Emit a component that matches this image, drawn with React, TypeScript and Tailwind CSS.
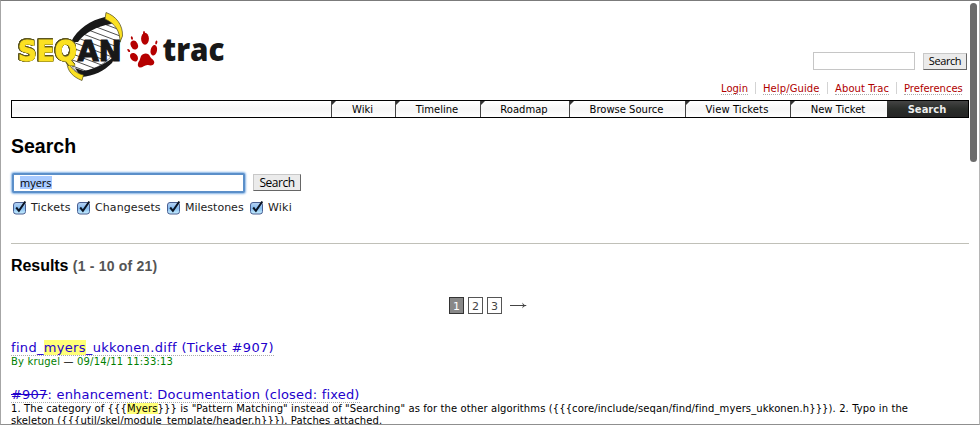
import React from 'react';

const verdana = "font-['DejaVu_Sans',sans-serif]";
const arial = "font-['Liberation_Sans',Arial,sans-serif]";
const lucida = "font-['Open_Sans',sans-serif]";

function Logo() {
  return (
    <svg width="225" height="80" viewBox="11 6 225 80" className="block">
      <defs>
        <clipPath id="helix">
          <path d="M107 20C92 25 78 36 71 46C66 59 71 68 79 73C97 70 112 60 119 45C123 35 121 26 107 20Z" />
        </clipPath>
      </defs>
      <path d="M107 20C92 25 78 36 71 46C66 59 71 68 79 73C97 70 112 60 119 45C123 35 121 26 107 20Z" fill="#fff" stroke="#333" strokeWidth="0.6" />
      <g clipPath="url(#helix)" stroke="#222" strokeWidth="0.8">
        {[0, 1, 2, 3, 4, 5, 6, 7, 8, 9, 10, 11].map((i) => (
          <line key={i} x1="62" y1={2 + i * 6} x2="128" y2={27 + i * 6} />
        ))}
      </g>
      <path d="M105 17L111 24C97 26 84 33 78 42L71 42C77 29 91 20 105 17Z" fill="#181818" />
      <path d="M98 20L108 17L115 23L104 25Z" fill="#181818" />
      <path d="M75 68L84 71C98 68 108 62 116 55L112 63C104 71 94 76 81 77Z" fill="#181818" />
      <path d="M106 12.500C116 16 123 25 122.500 36L120 42C120 32 116 24 105 19Z" fill="#fbe122" stroke="#4b4520" strokeWidth="0.7" />
      <path d="M67 54C67 65 74 73 83.500 75L82 80.500C73 77 67 71 67 62Z" fill="#fbe122" stroke="#4b4520" strokeWidth="0.7" />
      <g fontFamily="DejaVu Sans" fontWeight="700" fontSize="28">
        <text
          x="18"
          y="60.500"
          textLength="59"
          lengthAdjust="spacingAndGlyphs"
          fill="#fbe122"
          stroke="#fbe122"
          strokeWidth="1"
          className="[filter:drop-shadow(0.5px_0_0_#5c5520)_drop-shadow(-0.5px_0_0_#5c5520)_drop-shadow(0_0.5px_0_#5c5520)_drop-shadow(0_-0.5px_0_#5c5520)]"
        >
          SEQ
        </text>
        <text x="77.500" y="60.500" textLength="44" lengthAdjust="spacingAndGlyphs" fill="#181818" stroke="#181818" strokeWidth="1.200">AN</text>
      </g>
      <g fill="#b50000">
        <ellipse cx="145" cy="38.800" rx="3.900" ry="6" />
        <ellipse cx="134.300" cy="45" rx="3.500" ry="4.600" transform="rotate(-25 134.300 45)" />
        <ellipse cx="153.800" cy="50.300" rx="3.200" ry="5.300" transform="rotate(12 153.800 50.300)" />
        <ellipse cx="134" cy="57.200" rx="3.500" ry="4.700" transform="rotate(-38 134 57.200)" />
        <ellipse cx="144" cy="33" rx="1" ry="2" />
        <ellipse cx="131.900" cy="38" rx="1" ry="1.800" transform="rotate(-15 131.900 38)" />
        <ellipse cx="156.300" cy="42.500" rx="1" ry="2" transform="rotate(12 156.300 42.500)" />
        <ellipse cx="128.700" cy="50.500" rx="1" ry="1.800" transform="rotate(-40 128.700 50.500)" />
        <path d="M141 56C143 52.500 149 52.500 150 56.500C151 59 154.300 59.500 154.300 62.500C154 65.500 151 66 148 65C145 64.500 143 67.500 140 67.500C137 67 137.500 63 139.500 60.500Z" />
      </g>
      <text x="162.500" y="61" textLength="62" lengthAdjust="spacingAndGlyphs" fontFamily="Open Sans" fontWeight="800" fontSize="32" fill="#181818">trac</text>
    </svg>
  );
}

const metaLinks = [
  { label: 'Login', cls: 'w-[27px]' },
  { label: 'Help/Guide', cls: 'w-[57px] tracking-[0.1px]' },
  { label: 'About Trac', cls: 'w-[54px] tracking-[0.1px]' },
  { label: 'Preferences', cls: 'w-[58px]' },
];

const navItems = [
  { label: 'Wiki', cls: 'w-[64px]' },
  { label: 'Timeline', cls: 'w-[85px]' },
  { label: 'Roadmap', cls: 'w-[89px]' },
  { label: 'Browse Source', cls: 'w-[116px]' },
  { label: 'View Tickets', cls: 'w-[105px] tracking-[0.1px]' },
  { label: 'New Ticket', cls: 'w-[97px]' },
];

const filters = [
  { label: 'Tickets', cls: 'w-[46px] tracking-[0.2px]' },
  { label: 'Changesets', cls: 'w-[72px] tracking-[0.1px]' },
  { label: 'Milestones', cls: 'w-[65px]' },
  { label: 'Wiki', cls: 'w-[30px] tracking-[0.2px]' },
];

function CheckMark() {
  return (
    <svg width="14" height="15" viewBox="0 0 14 15" className="block shrink-0">
      <defs>
        <linearGradient id="aqua" x1="0" y1="0" x2="0" y2="1">
          <stop offset="0" stopColor="#b9d3f2" />
          <stop offset="0.5" stopColor="#86bcf0" />
          <stop offset="1" stopColor="#c8f0ff" />
        </linearGradient>
      </defs>
      <rect x="0.500" y="2.500" width="12" height="11.500" rx="2.500" fill="url(#aqua)" stroke="#4a5f92" />
      <path d="M3.200 7.500L5.900 10.800L12.300 1.500" fill="none" stroke="#0b1424" strokeWidth="2" />
    </svg>
  );
}

function Button({ className }: { className: string }) {
  return (
    <button className={`${className} ${lucida} flex items-center justify-center border border-[#c8c8c8] border-r-[#666] border-b-[#666] bg-[#ebebeb] text-black`}>
      Search
    </button>
  );
}

export default function App() {
  return (
    <div className={`relative h-[425px] w-[980px] overflow-hidden border border-t-[#7b7b7b] border-r-[#b5b5b5] border-b-[#8f8f8f] border-l-[#a6a6a6] bg-white text-black ${verdana}`}>
      <div className="flex h-full w-[968px] flex-col pl-[10px]">
        <header className="flex h-[99px] shrink-0 justify-between">
          <div className="pt-[5px]">
            <Logo />
          </div>
          <div className="flex flex-col items-end">
            <div className="mt-[51px] mr-[2px] flex h-[18px] items-center gap-2">
              <div className="h-[18px] w-[102px] border border-[#c6c6c6]" />
              <Button className="h-[17px] w-[44px] text-[11px] tracking-[-0.4px]" />
            </div>
            <ul className="mt-[13px] mr-[7px] flex text-[10px] leading-[12px] text-[#b00000]">
              {metaLinks.map((l, i) => (
                <li key={l.label} className="flex">
                  {i > 0 && <span className="mx-[7px] -mt-px h-[12px] w-px bg-[#d3d3d3]" />}
                  <a className={`${l.cls} h-[12px] border-b border-dotted border-[#aaa] whitespace-nowrap`}>{l.label}</a>
                </li>
              ))}
            </ul>
          </div>
        </header>

        <nav className="flex h-[18px] w-[958px] shrink-0 justify-end border border-black bg-linear-to-b from-white via-[#f5f5f5] to-white text-[10px] leading-[17px]">
          {navItems.map((n) => (
            <a key={n.label} className={`${n.cls} relative border-l border-[#444] pr-[2px] text-center whitespace-nowrap`}>
              <span className="absolute top-0 left-0 border-t-4 border-r-4 border-t-[#333] border-r-transparent" />
              {n.label}
            </a>
          ))}
          <a className="w-[81px] bg-linear-to-b from-[#444] via-[#2a2d2a] to-[#252525] pr-[1px] text-center font-bold whitespace-nowrap text-[#eee]">Search</a>
        </nav>

        <h1 className={`${arial} mt-[17px] text-[19.5px] leading-[22px] font-bold tracking-[0px]`}>Search</h1>

        <div className="mt-[14px] flex h-[23px] shrink-0 items-center gap-2">
          <div className={`${lucida} ml-px h-[20px] w-[233px] rounded-[2px] border-2 border-[#5b8fc9] bg-white pl-[6px] text-[11px] leading-[15px] shadow-[0_0_2px_1px_#85b3e5]`}>
            <span className="inline-block h-[13px] w-[32px] bg-[#a8caff] leading-[13px]">myers</span>
          </div>
          <Button className="h-[17px] w-[48px] text-[12px] tracking-[-0.5px]" />
        </div>

        <div className="mt-[6px] ml-[2px] flex h-[15px] text-[11px] leading-[15px] text-[#222]">
          {filters.map((f) => (
            <label key={f.label} className="flex">
              <CheckMark />
              <span className={`${f.cls} ml-[4px] whitespace-nowrap`}>{f.label}</span>
            </label>
          ))}
        </div>

        <hr className="mt-[28px] w-[958px] shrink-0 border-[#c0c0b8]" />

        <h2 className={`${arial} mt-[12px] h-[20px] text-[16px] leading-[20px] font-bold tracking-[-0.05px]`}>
          Results <span className="text-[14px] tracking-[0.2px] text-[#555]">(1 - 10 of 21)</span>
        </h2>

        <div className="mt-[21px] ml-[438px] flex h-[17px] shrink-0 items-center gap-1 text-[11px] text-[#444]">
          <span className="h-[17px] w-[15px] border border-[#333] bg-[#888] text-center leading-[17px] text-white">1</span>
          <span className="h-[17px] w-[15px] border border-[#555] text-center leading-[17px]">2</span>
          <span className="h-[17px] w-[15px] border border-[#555] text-center leading-[17px]">3</span>
          <svg width="18" height="9" viewBox="0 0 18 9" className="ml-1">
            <path d="M0 4.500H16" fill="none" stroke="#444" />
            <path d="M12 1.500Q13.500 4 17 4.500Q13.500 5 12 7.500L13.200 4.500Z" fill="#444" />
          </svg>
        </div>

        <dl className="mt-[26px]">
          <dt className="h-[16px] text-[13px] leading-[15px] text-[#2200cc]">
            <a className="inline-block h-[16px] border-b border-dotted border-[#aaa] tracking-[0.32px] whitespace-nowrap">
              find_<span className="bg-[#ffff77]">myers</span>_ukkonen.diff (Ticket #907)
            </a>
          </dt>
          <dd className="h-[12px] text-[10px] leading-[12px] tracking-[0.18px] whitespace-nowrap text-[#008000]">
            By krugel <span className="text-black">—</span> 09/14/11 11:33:13
          </dd>
          <dt className="mt-[19px] h-[16px] text-[13px] leading-[15px] text-[#2200cc]">
            <a className="inline-block h-[16px] border-b border-dotted border-[#aaa] tracking-[0.2px] whitespace-nowrap">
              <del>#907</del>: enhancement: Documentation (closed: fixed)
            </a>
          </dt>
          <dd className="text-[10px] leading-[12px] tracking-[0.1px] whitespace-nowrap">
            1. The category of {'{{{'}<span className="bg-[#ffff77]">Myers</span>{'}}}'} is "Pattern Matching" instead of "Searching" as for the other algorithms {'({{{core/include/seqan/find/find_myers_ukkonen.h}}})'}. 2. Typo in the
            <br />
            {'skeleton ({{{util/skel/module_template/header.h}}}). Patches attached.'}
          </dd>
        </dl>
      </div>
      <div className="absolute top-[2px] right-[2px] h-[159px] w-[7px] rounded-full bg-[#6b6b6b]" />
    </div>
  );
}
